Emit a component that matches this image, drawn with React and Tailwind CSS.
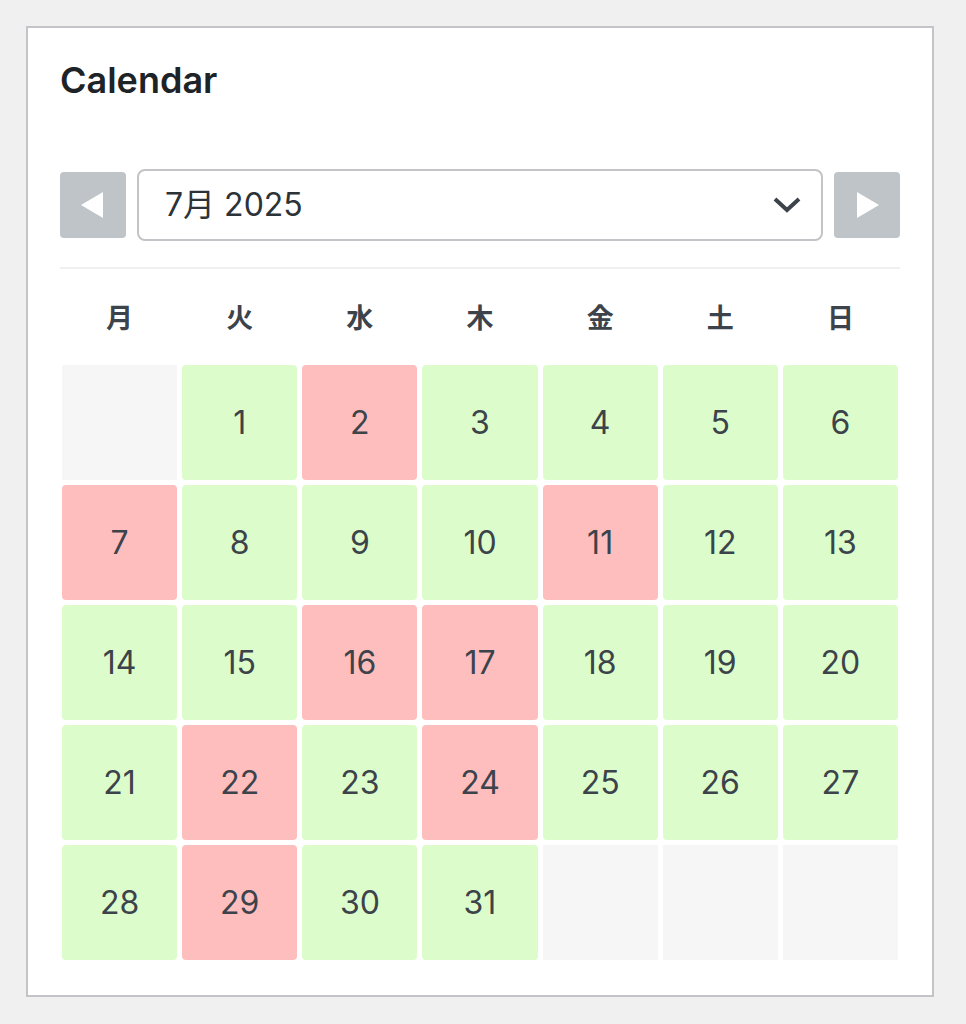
import React from "react";

const WEEKDAYS = ["月", "火", "水", "木", "金", "土", "日"];
const BOOKED = [2, 7, 11, 16, 17, 22, 24, 29];

const buildCells = () => {
    const cells = [null];
    for (let d = 1; d <= 31; d++) cells.push(d);
    while (cells.length % 7 !== 0) cells.push(null);
    return cells;
};

const NavButton = ({ dir }) => (
    <button
        type="button"
        className="flex h-[66px] w-[66px] shrink-0 items-center justify-center rounded-[4px] bg-[#bfc4c8]"
    >
        <svg width="24" height="26" viewBox="0 0 24 26">
            {dir === "prev" ? (
                <polygon points="22,0 22,26 0,13" fill="#ffffff" />
            ) : (
                <polygon points="2,0 2,26 24,13" fill="#ffffff" />
            )}
        </svg>
    </button>
);

export default function App() {
    const cells = buildCells();

    return (
        <div className="min-h-screen bg-[#f0f0f1] pl-[26px] pt-[26px] font-['Inter','Noto_Sans_CJK_JP',sans-serif]">
            <div className="w-[908px] border-2 border-[#c3c4c7] bg-white px-[32px] pb-[35px] pt-[31px]">
                <h2 className="text-[36px] font-semibold leading-[1.2] text-[#1d2327]">
                    Calendar
                </h2>

                <div className="mt-[67px] flex items-center gap-[11px]">
                    <NavButton dir="prev" />
                    <div className="flex h-[72px] flex-1 items-center justify-between rounded-[8px] border-2 border-[#c3c4c7] pl-[26px] pr-[20px]">
                        <span className="text-[32px] text-[#2c3338]">7月 2025</span>
                        <svg width="28" height="16" viewBox="0 0 28 16" fill="none">
                            <polyline
                                points="2,2 14,13 26,2"
                                stroke="#3c434a"
                                strokeWidth="4"
                                strokeLinejoin="miter"
                            />
                        </svg>
                    </div>
                    <NavButton dir="next" />
                </div>

                <div className="mt-[26px] h-[2px] bg-[#f0f0f1]" />

                <div className="mt-[26px] grid grid-cols-7 gap-[5px] px-[2px]">
                    {WEEKDAYS.map((w) => (
                        <div
                            key={w}
                            className="flex h-[48px] items-center justify-center text-[27px] font-bold text-[#3c434a]"
                        >
                            {w}
                        </div>
                    ))}
                </div>

                <div className="mt-[22px] grid grid-cols-7 gap-[5px] px-[2px]">
                    {cells.map((d, i) =>
                        d === null ? (
                            <div key={i} className="h-[115px] bg-[#f6f6f6]" />
                        ) : (
                            <div
                                key={i}
                                className={
                                    BOOKED.includes(d)
                                        ? "flex h-[115px] items-center justify-center rounded-[4px] bg-[#ffbebe] text-[32px] text-[#3c434a]"
                                        : "flex h-[115px] items-center justify-center rounded-[4px] bg-[#dcfdcb] text-[32px] text-[#3c434a]"
                                }
                            >
                                {d}
                            </div>
                        )
                    )}
                </div>
            </div>
        </div>
    );
}
